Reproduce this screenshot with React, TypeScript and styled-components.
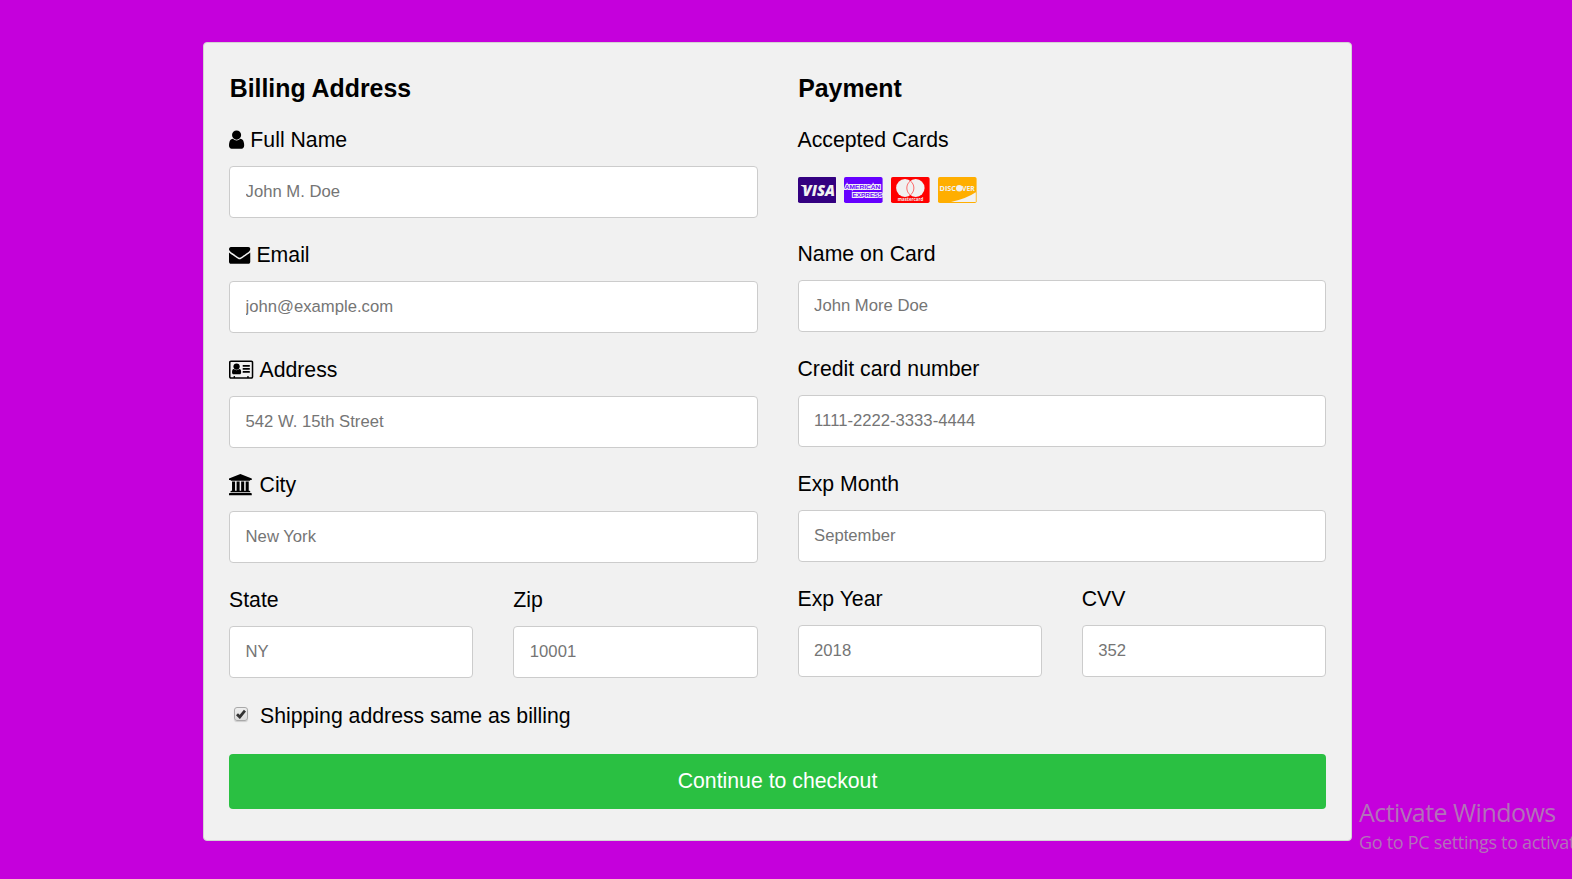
import React from "react";
import styled, { createGlobalStyle } from "styled-components";

const GlobalStyle = createGlobalStyle`
  * { box-sizing: border-box; }
  html, body { margin: 0; padding: 0; height: 100%; overflow: hidden; }
  body {
    background: #c500dc;
    font-family: "Liberation Sans", Arial, sans-serif;
    font-size: 21.25px;
    color: #000;
  }
`;

const Page = styled.main`
  position: relative;
  height: 879px;
  overflow: hidden;
  padding: 42px 0 0 203px;
`;

const Container = styled.form`
  width: 1149px;
  height: 799px;
  padding: 0 25px;
  background: #f1f1f1;
  border: 1px solid #d3d3d3;
  border-radius: 4px;
`;

const Columns = styled.div`
  display: grid;
  grid-template-columns: 1fr 1fr;
  column-gap: 40px;
`;

const Column = styled.section`
  padding-top: 31px;
`;

const Heading = styled.h3`
  margin: 0 0 24px;
  padding-left: 0.7px;
  height: 29px;
  line-height: 29px;
  font-size: 24.86px;
  font-weight: bold;
`;

const Field = styled.div`
  display: flex;
  flex-direction: column;
  margin-bottom: 24px;
  min-width: 0;
`;

const Label = styled.label`
  display: flex;
  align-items: center;
  height: 26px;
  margin-bottom: 13px;
  line-height: 26px;
  white-space: pre;
`;

const Input = styled.input`
  width: 100%;
  height: 52px;
  padding: 0 15.6px;
  border: 1px solid #ccc;
  border-radius: 4px;
  background: #fff;
  font-family: inherit;
  font-size: 16.67px;
  outline: none;
  &::placeholder { color: #757575; opacity: 1; }
`;

const Row = styled.div`
  display: grid;
  grid-template-columns: 1fr 1fr;
  column-gap: 40px;
`;

const Glyph = styled.svg<{ $gap?: number }>`
  display: block;
  height: 21.25px;
  margin-left: 0.4px;
  margin-right: ${(p) => p.$gap ?? 5.8}px;
  fill: #000;
`;

const Cards = styled.div`
  display: flex;
  align-items: flex-start;
  gap: 8.3px;
  height: 51px;
  padding-top: 11px;
  margin-bottom: 24px;
`;

const CardSvg = styled.svg`
  display: block;
  width: 38.6px;
  height: 26px;
  overflow: hidden;
`;

const Shipping = styled.label`
  display: flex;
  align-items: center;
  height: 26px;
  margin-top: 1px;
  padding-left: 5px;
`;

const Box = styled.span`
  display: flex;
  align-items: center;
  justify-content: center;
  width: 14px;
  height: 14px;
  margin: 0 12px 4px 0;
  border: 1px solid #a9a9a9;
  border-radius: 3px;
  background: linear-gradient(#eee, #dcdcdc);
  box-shadow: 0 1px 1px #ccc;
`;

const Submit = styled.button`
  display: block;
  width: 100%;
  height: 55px;
  margin-top: 25px;
  border: 0;
  border-radius: 4px;
  background: #2ac042;
  color: #fff;
  font-family: inherit;
  font-size: 21.25px;
`;

const Watermark = styled.div`
  position: absolute;
  left: 1359px;
  top: 796px;
  color: #b272b8;
  font-family: "Open Sans", sans-serif;
  white-space: nowrap;
`;

const WatermarkTitle = styled.div`
  font-size: 25px;
  line-height: 33px;
  letter-spacing: -0.53px;
`;

const WatermarkText = styled.div`
  font-size: 18px;
  line-height: 26px;
  letter-spacing: -0.3px;
`;

const UserIcon = () => (
  <Glyph viewBox="256 0 1280 1792">
    <path d="M1536 1399q0 109-62.5 187t-150.5 78h-854q-88 0-150.5-78t-62.5-187q0-85 8.5-160.5t31.5-152 58.5-131 94-89 134.5-34.5q131 128 313 128t313-128q76 0 134.5 34.5t94 89 58.5 131 31.5 152 8.5 160.5zm-256-887q0 159-112.5 271.5t-271.5 112.5-271.5-112.5-112.5-271.5 112.5-271.5 271.5-112.5 271.5 112.5 112.5 271.5z" />
  </Glyph>
);

const EnvelopeIcon = () => (
  <Glyph viewBox="0 0 1792 1792">
    <path d="M1792 710v794q0 66-47 113t-113 47h-1472q-66 0-113-47t-47-113v-794q44 49 101 87 362 246 497 345 57 42 92.5 65.5t94.5 48 110 24.5h2q51 0 110-24.5t94.5-48 92.5-65.5q170-123 498-345 57-39 100-87zm0-294q0 79-49 151t-122 123q-376 261-468 325-10 7-42.5 31t-54 38.5-52 32.5-57.5 27-50 9h-2q-23 0-50-9t-57.5-27-52-32.5-54-38.5-42.5-31q-91-64-262-182.5t-205-142.5q-62-42-117-115.5t-55-136.5q0-78 41.5-130t118.5-52h1472q65 0 112.5 47t47.5 113z" />
  </Glyph>
);

const AddressCardIcon = () => (
  <Glyph viewBox="0 0 2048 1792">
    <path
      fillRule="evenodd"
      d="M160 128h1728q66 0 113 47t47 113v1216q0 66-47 113t-113 47h-1728q-66 0-113-47t-47-113v-1216q0-66 47-113t113-47zm0 128q-32 0-32 32v1216q0 32 32 32h224v-64q0-32 32-32h64q32 0 32 32v64h1024v-64q0-32 32-32h64q32 0 32 32v64h224q32 0 32-32v-1216q0-32-32-32z"
    />
    <path d="M1024 1131q0 64-37 106t-91 42h-512q-54 0-91-42t-37-106q0-118 29-200t118-82q97 92 237 92t237-92q89 0 118 82t29 200z" />
    <circle cx="640" cy="640" r="265" />
    <path d="M1184 500h544q32 0 32 32v88q0 32-32 32h-544q-32 0-32-32v-88q0-32 32-32zM1184 756h544q32 0 32 32v88q0 32-32 32h-544q-32 0-32-32v-88q0-32 32-32zM1184 1012h544q32 0 32 32v88q0 32-32 32h-544q-32 0-32-32v-88q0-32 32-32z" />
  </Glyph>
);

const UniversityIcon = () => (
  <Glyph viewBox="0 0 1920 1792" $gap={7.4}>
    <path d="M960 0l960 384v128h-128q0 26-20.5 45t-48.5 19h-1526q-28 0-48.5-19t-20.5-45h-128v-128zm-704 640h256v768h128v-768h256v768h128v-768h256v768h128v-768h256v768h59q28 0 48.5 19t20.5 45v64h-1664v-64q0-26 20.5-45t48.5-19h59v-768zm1595 960q28 0 48.5 19t20.5 45v128h-1920v-128q0-26 20.5-45t48.5-19h1782z" />
  </Glyph>
);

const VisaCard = () => (
  <CardSvg viewBox="0 0 38.6 26">
    <rect width="38.6" height="26" rx="1.8" fill="#330080" />
    <path d="M2.8 8H7.2L8.6 13Q6.6 9.6 2.8 8.4Z" fill="#f1f1f1" />
    <text x="4.6" y="19.2" textLength="32.4" lengthAdjust="spacingAndGlyphs" fill="#f1f1f1" fontFamily="Open Sans, sans-serif" fontWeight="800" fontStyle="italic" fontSize="15.5">VISA</text>
  </CardSvg>
);

const AmexCard = () => (
  <CardSvg viewBox="0 0 38.6 26">
    <rect width="38.6" height="26" rx="1.8" fill="#6600ff" />
    <g fill="#6600ff" stroke="#f1f1f1" strokeWidth="1.9" paintOrder="stroke" fontFamily="Liberation Sans, sans-serif" fontWeight="700" fontSize="6">
      <text x="0.8" y="11.6" textLength="35.5" lengthAdjust="spacingAndGlyphs">AMERICAN</text>
      <text x="8.6" y="19.6" textLength="30" lengthAdjust="spacingAndGlyphs">EXPRESS</text>
    </g>
  </CardSvg>
);

const MastercardCard = () => (
  <CardSvg viewBox="0 0 38.6 26">
    <rect width="38.6" height="26" rx="1.8" fill="#ff0000" />
    <circle cx="14" cy="11" r="8.9" fill="#f1f1f1" />
    <circle cx="24.7" cy="11" r="8.9" fill="#f1f1f1" />
    <path d="M19.35 3.9A8.9 8.9 0 0 1 19.35 18.1A8.9 8.9 0 0 1 19.35 3.9Z" fill="none" stroke="#ff3030" strokeWidth="0.7" />
    <text x="6.8" y="23.8" textLength="25.4" lengthAdjust="spacingAndGlyphs" fill="#f1f1f1" fontFamily="Open Sans, sans-serif" fontWeight="700" fontSize="4.4">mastercard</text>
  </CardSvg>
);

const DiscoverCard = () => (
  <CardSvg viewBox="0 0 38.6 26">
    <rect width="38.6" height="26" rx="1.8" fill="#ffae00" />
    <path d="M13 24.9Q28 22 37.8 15.3V24.9Z" fill="#f1f1f1" />
    <g fill="#f1f1f1" fontFamily="Open Sans, sans-serif" fontWeight="700" fontSize="7.6">
      <text x="1.6" y="13.9" textLength="16.4" lengthAdjust="spacingAndGlyphs">DISC</text>
      <text x="24" y="13.9" textLength="12.8" lengthAdjust="spacingAndGlyphs">VER</text>
    </g>
    <circle cx="21.2" cy="11.2" r="3.2" fill="#f1f1f1" />
  </CardSvg>
);

interface TextFieldProps {
  label: string;
  placeholder: string;
  icon?: React.ReactNode;
}

const TextField = ({ label, placeholder, icon }: TextFieldProps) => (
  <Field>
    <Label>
      {icon}
      {label}
    </Label>
    <Input placeholder={placeholder} />
  </Field>
);

export default function App() {
  return (
    <>
      <GlobalStyle />
      <Page>
        <Container>
          <Columns>
            <Column>
              <Heading>Billing Address</Heading>
              <TextField label="Full Name" placeholder="John M. Doe" icon={<UserIcon />} />
              <TextField label="Email" placeholder="john@example.com" icon={<EnvelopeIcon />} />
              <TextField label="Address" placeholder="542 W. 15th Street" icon={<AddressCardIcon />} />
              <TextField label="City" placeholder="New York" icon={<UniversityIcon />} />
              <Row>
                <TextField label="State" placeholder="NY" />
                <TextField label="Zip" placeholder="10001" />
              </Row>
            </Column>
            <Column>
              <Heading>Payment</Heading>
              <Label>Accepted Cards</Label>
              <Cards>
                <VisaCard />
                <AmexCard />
                <MastercardCard />
                <DiscoverCard />
              </Cards>
              <TextField label="Name on Card" placeholder="John More Doe" />
              <TextField label="Credit card number" placeholder="1111-2222-3333-4444" />
              <TextField label="Exp Month" placeholder="September" />
              <Row>
                <TextField label="Exp Year" placeholder="2018" />
                <TextField label="CVV" placeholder="352" />
              </Row>
            </Column>
          </Columns>
          <Shipping>
            <Box>
              <svg width="10" height="10" viewBox="0 0 10 10">
                <path d="M1 5.2L3.8 8L9 1.6" fill="none" stroke="#333" strokeWidth="2.8" />
              </svg>
            </Box>
            Shipping address same as billing
          </Shipping>
          <Submit type="button">Continue to checkout</Submit>
        </Container>
        <Watermark>
          <WatermarkTitle>Activate Windows</WatermarkTitle>
          <WatermarkText>Go to PC settings to activate</WatermarkText>
        </Watermark>
      </Page>
    </>
  );
}
